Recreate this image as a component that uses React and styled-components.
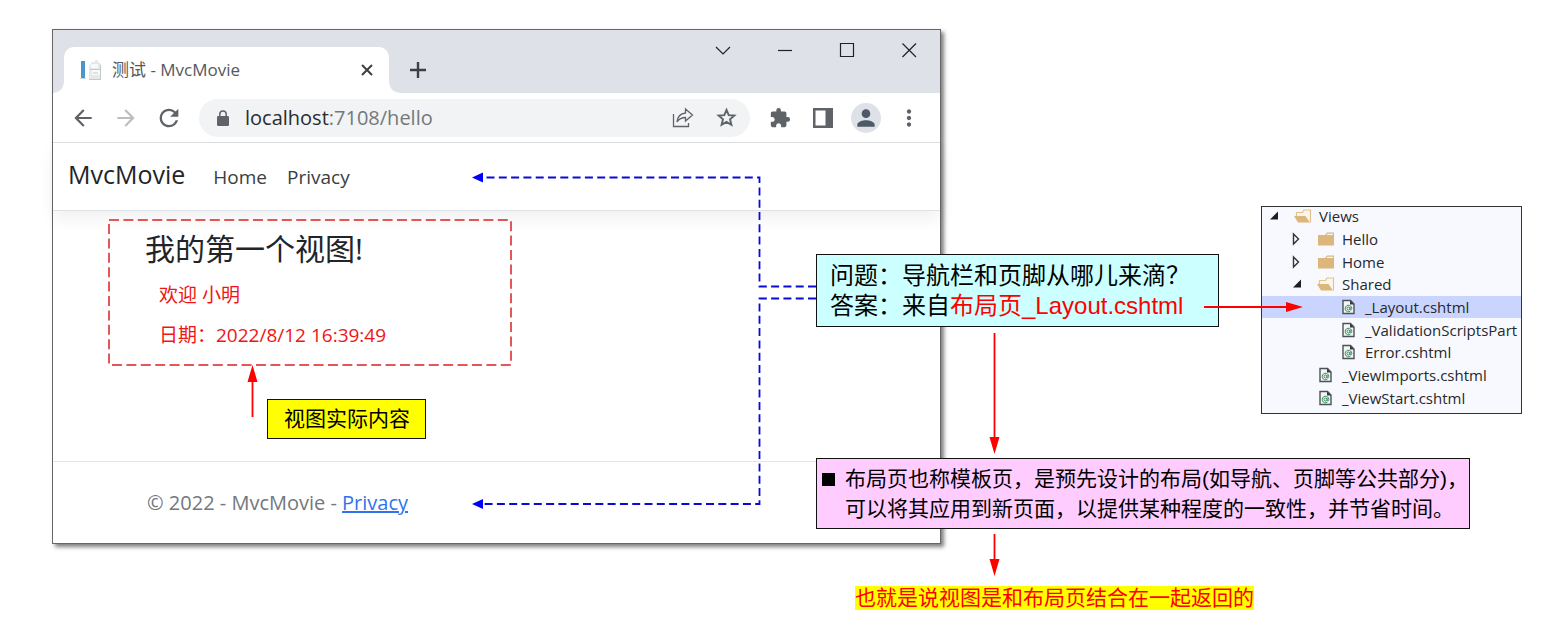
import React from "react";
import styled, { createGlobalStyle, css } from "styled-components";
import {
  MdArrowBack,
  MdArrowForward,
  MdRefresh,
  MdExtension,
  MdPerson,
  MdMoreVert,
} from "react-icons/md";

const uiFont = `"Open Sans", "Noto Sans CJK SC", sans-serif`;
const noteFont = `"Liberation Sans", "Noto Sans CJK SC", sans-serif`;

const GlobalStyle = createGlobalStyle`
  *, *::before, *::after { box-sizing: border-box; }
  body { margin: 0; background: #fff; }
  h1, p, ul { margin: 0; padding: 0; }
  ul { list-style: none; }
  svg { display: block; }
`;

/* The diagram canvas: windows and notes are placed freely on it. */
const Canvas = styled.main`
  position: relative;
  min-height: 632px;
  overflow: hidden;
  font-family: ${uiFont};
`;

const Node = styled.div`
  position: absolute;
  left: ${(p) => p.$x}px;
  top: ${(p) => p.$y}px;
`;

/* ---------- browser window ---------- */

const Browser = styled.section`
  display: flex;
  flex-direction: column;
  width: 889px;
  min-height: 515px;
  background: #fff;
  border: 1px solid #666;
  box-shadow: 3px 3px 4px rgba(0, 0, 0, 0.5);
`;

const TabStrip = styled.header`
  display: flex;
  align-items: flex-end;
  height: 63px;
  padding-left: 11px;
  background: #dee1e7;
`;

const Tab = styled.div`
  position: relative;
  display: flex;
  align-items: center;
  gap: 9px;
  width: 325px;
  height: 46px;
  padding: 0 12px 0 16px;
  background: #fff;
  border-radius: 10px 10px 0 0;
  color: #55585c;
  font-size: 17px;
  line-height: 24px;

  &::before,
  &::after {
    content: "";
    position: absolute;
    bottom: 0;
    width: 10px;
    height: 10px;
  }
  &::before {
    left: -10px;
    background: radial-gradient(circle at 0 0, #dee1e7 9px, #fff 10px);
  }
  &::after {
    right: -10px;
    background: radial-gradient(circle at 100% 0, #dee1e7 9px, #fff 10px);
  }
`;

const TabTitle = styled.span`
  flex: 1;
  white-space: nowrap;
`;

const IconButton = styled.button`
  display: flex;
  align-items: center;
  justify-content: center;
  flex: none;
  width: ${(p) => p.$w || 36}px;
  height: ${(p) => p.$h || 36}px;
  padding: 0;
  border: 0;
  background: none;
  color: ${(p) => p.$color || "#5f6368"};
`;

const WindowControls = styled.div`
  display: flex;
  align-self: flex-start;
  margin-left: auto;
`;

const Toolbar = styled.div`
  display: flex;
  align-items: center;
  height: 50px;
  padding: 0 13px 0 12px;
  border-bottom: 1px solid #dcdee0;
`;

const ButtonGroup = styled.div`
  display: flex;
  align-items: center;
  gap: 7px;
`;

const AddressBar = styled.div`
  display: flex;
  align-items: center;
  flex: 1;
  height: 38px;
  margin: 0 12px;
  padding: 0 6px 0 15px;
  border-radius: 19px;
  background: #f1f3f4;
  color: #5f6368;
`;

const Address = styled.div`
  flex: 1;
  margin-left: 13px;
  color: #74787c;
  font-size: 20px;
  line-height: 28px;
  outline: none;
`;

const Host = styled.span`
  color: #2a2c2f;
`;

const Avatar = styled.span`
  display: flex;
  align-items: center;
  justify-content: center;
  width: 30px;
  height: 30px;
  border-radius: 50%;
  background: #dee1e7;
  color: #4d5868;
`;

/* ---------- page inside the browser ---------- */

const NavBar = styled.nav`
  display: flex;
  align-items: baseline;
  height: 68px;
  padding: 14px 15px;
  border-bottom: 1px solid #dee2e6;
  box-shadow: 0 8px 16px rgba(0, 0, 0, 0.06);
`;

const NavLink = styled.a`
  margin-right: 20px;
  color: #3a3e42;
  font-size: 19px;
  line-height: 34px;
  text-decoration: none;

  ${(p) =>
    p.$brand &&
    css`
      margin-right: 28px;
      color: #212529;
      font-size: 25px;
    `}
`;

const PageBody = styled.div`
  flex: 1;
  padding: 9px 56px 0;
`;

const ViewArea = styled.div`
  position: relative;
  width: 402px;
  padding: 9px 36px 18px;
`;

const DashedFrame = styled.svg`
  position: absolute;
  inset: 0;
  width: 100%;
  height: 100%;
  overflow: visible;
`;

const ViewTitle = styled.h1`
  color: #212529;
  font-size: 30px;
  font-weight: 400;
  line-height: 40px;
`;

const ViewText = styled.p`
  margin: 14px 0 16px 14px;
  color: #f01414;
  font-size: 19px;
  line-height: 24px;

  & + & {
    margin: 0 0 0 14px;
  }
`;

const Footer = styled.footer`
  height: 82px;
  padding: 27px 94px;
  border-top: 1px solid #e3e5e8;
  color: #72787e;
  font-size: 20px;
  line-height: 28px;
`;

const FooterLink = styled.a`
  color: #2f74ee;
  text-decoration: underline;
`;

/* ---------- notes ---------- */

const Note = styled.div`
  border: 1px solid #111;
  background: ${(p) => p.$bg};
  padding: ${(p) => p.$pad};
  color: #000;
  font-family: ${noteFont};
  font-size: ${(p) => p.$size || 21}px;
  line-height: 30px;
  white-space: nowrap;
`;

const Red = styled.span`
  color: #f00;
`;

const BulletRow = styled.div`
  display: flex;
  gap: 10px;

  &::before {
    content: "";
    width: 13px;
    height: 13px;
    margin-top: 9px;
    background: #000;
  }
`;

const Conclusion = styled.mark`
  display: block;
  background: #ff0;
  color: #f00;
  font-family: ${noteFont};
  font-size: 21px;
  line-height: 24px;
  white-space: nowrap;
`;

/* ---------- solution explorer ---------- */

const Explorer = styled.div`
  width: 261px;
  height: 208px;
  overflow: hidden;
  border: 1px solid #333;
  background: #f7f9fe;
`;

const Tree = styled.ul`
  display: flex;
  flex-direction: column;
  height: 204px;
  margin-top: -2px;
`;

const TreeRow = styled.li`
  display: flex;
  align-items: center;
  flex: 1;
  min-height: 0;
  padding-left: ${(p) => 4 + p.$level * 23}px;
  background: ${(p) => (p.$selected ? "#c9d5ff" : "none")};
  color: #26282c;
  font-size: 15px;
  line-height: 22px;
  white-space: nowrap;
`;

const Twisty = styled.span`
  flex: none;
  width: 16px;
  margin-right: 12px;
`;

const TreeIcon = styled.span`
  flex: none;
  width: 18px;
  margin-right: 7px;
`;

const Overlay = styled.svg`
  position: absolute;
  left: 0;
  top: 0;
  pointer-events: none;
`;

const Favicon = () => (
  <svg width="23" height="22" viewBox="0 0 23 22" aria-hidden="true">
    <rect x="1" y="2" width="4" height="17" fill="#4a96cc" />
    <rect x="0" y="19" width="6" height="1" fill="#d5d9dc" />
    <path d="M9 7l3-4h3V1h3v2l3 2v16H9z" fill="#e6e8ea" />
    <path d="M11 5h7v4h-7zM12 11h8v5h-8z" fill="#f8f9f9" />
    <path d="M10 10.500h10M13 14h5M9 20.500h12M20.500 6v14" stroke="#c6c9cc" />
  </svg>
);

const LockIcon = () => (
  <svg width="18" height="18" viewBox="0 0 18 18" aria-hidden="true">
    <rect x="3" y="7" width="12" height="10" rx="1.200" fill="currentColor" />
    <path d="M5.800 8V5.200a3.200 3.200 0 0 1 6.400 0V8" fill="none" stroke="currentColor" strokeWidth="1.500" />
  </svg>
);

const ShareIcon = () => (
  <svg width="22" height="22" viewBox="0 0 22 22" fill="none" stroke="currentColor" strokeWidth="1.3" aria-hidden="true">
    <path d="M1.500 7v12.500h15V16" />
    <path d="M13.500 2l7 6-7 6v-3.500c-4 0-6.500 1.500-8.500 4.500 .5-5 3.500-8.500 8.500-9z" />
  </svg>
);

const StarIcon = () => (
  <svg width="23" height="23" viewBox="0 0 24 24" fill="none" stroke="currentColor" strokeWidth="2" aria-hidden="true">
    <path d="M12 4.100l2.300 5.400 5.900.5-4.500 3.900 1.400 5.700-5.100-3-5.100 3 1.400-5.700-4.500-3.900 5.900-.5z" />
  </svg>
);

const SidePanelIcon = () => (
  <svg width="20" height="20" viewBox="0 0 20 20" aria-hidden="true">
    <path d="M0 0h20v20H0zM2.500 2.500v15h10v-15z" fill="currentColor" fillRule="evenodd" />
  </svg>
);

const FolderIcon = ({ open }) => (
  <svg width="18" height="16" viewBox="0 0 18 16" aria-hidden="true">
    {open ? (
      <>
        <path d="M2.500 8V4.500h6l1.500-2.500h6.500v12.500" fill="#fbf6ec" stroke="#e3c48f" strokeWidth="1.200" />
        <path d="M0 8h11.500l4.500 6.500H4z" fill="#dcb67a" />
      </>
    ) : (
      <path d="M1 4h7l2-2.500h7V14.500H1zM10.500 2.800l-1 1.200h6.500V2.800z" fill="#dcb67a" fillRule="evenodd" />
    )}
  </svg>
);

const RazorFileIcon = () => (
  <svg width="16" height="16" viewBox="-1 0 16 16" fill="none" aria-hidden="true">
    <path d="M2 1.500h7.500l3.500 3.500v9.500H2z" fill="#f4f6f6" stroke="#4c5256" strokeWidth="1.400" />
    <path d="M9 1.500v4h4z" fill="#33383c" />
    <circle cx="7.500" cy="9.500" r="1.500" stroke="#388a5a" strokeWidth="1" />
    <path d="M9 8v2.300c0 1.200 1.800 1 1.800-.8a3.300 3.300 0 1 0-1.500 2.800" stroke="#388a5a" strokeWidth="1" />
  </svg>
);

const TwistyIcon = ({ open }) => (
  <svg width="16" height="16" viewBox="0 0 16 16" aria-hidden="true">
    {open ? (
      <path d="M12 3.500v8H4z" fill="#1e1e1e" />
    ) : (
      <path d="M4.500 3l5 5-5 5z" fill="none" stroke="#333" strokeWidth="1.400" />
    )}
  </svg>
);

const controls = [
  ["搜索标签页", "M3 7l7 7 7-7"],
  ["最小化", "M3 10.500h14"],
  ["最大化", "M3.500 3.500h13v13h-13z"],
  ["关闭", "M3.500 3.500l13.500 13.500M17 3.500L3.500 17"],
];

const tree = [
  { name: "Views", level: 0, kind: "folder", open: true },
  { name: "Hello", level: 1, kind: "folder" },
  { name: "Home", level: 1, kind: "folder" },
  { name: "Shared", level: 1, kind: "folder", open: true },
  { name: "_Layout.cshtml", level: 2, kind: "file", selected: true },
  { name: "_ValidationScriptsPart", level: 2, kind: "file" },
  { name: "Error.cshtml", level: 2, kind: "file" },
  { name: "_ViewImports.cshtml", level: 1, kind: "file" },
  { name: "_ViewStart.cshtml", level: 1, kind: "file" },
];

function BrowserWindow() {
  return (
    <Browser>
      <TabStrip>
        <Tab>
          <Favicon />
          <TabTitle>测试 - MvcMovie</TabTitle>
          <IconButton $w={20} $h={20} $color="#3c4043" aria-label="关闭标签页">
            <svg width="20" height="20" viewBox="0 0 20 20" stroke="currentColor" strokeWidth="2">
              <path d="M5 5l10 10M15 5L5 15" />
            </svg>
          </IconButton>
        </Tab>
        <IconButton $w={58} $h={46} $color="#3c4043" aria-label="新标签页">
          <svg width="18" height="18" viewBox="0 0 18 18" stroke="currentColor" strokeWidth="2.400">
            <path d="M9 1v16M1 9h16" />
          </svg>
        </IconButton>
        <WindowControls>
          {controls.map(([label, d]) => (
            <IconButton key={label} $w={62} $h={40} $color="#222" aria-label={label}>
              <svg width="20" height="20" viewBox="0 0 20 20" fill="none" stroke="currentColor" strokeWidth="1.200">
                <path d={d} />
              </svg>
            </IconButton>
          ))}
        </WindowControls>
      </TabStrip>
      <Toolbar>
        <ButtonGroup>
          <IconButton aria-label="后退"><MdArrowBack size={26} /></IconButton>
          <IconButton $color="#bcbec1" aria-label="前进"><MdArrowForward size={26} /></IconButton>
          <IconButton aria-label="重新加载"><MdRefresh size={28} /></IconButton>
        </ButtonGroup>
        <AddressBar>
          <LockIcon />
          <Address role="textbox" tabIndex={0} aria-label="地址">
            <Host>localhost</Host>:7108/hello
          </Address>
          <ButtonGroup>
            <IconButton aria-label="分享"><ShareIcon /></IconButton>
            <IconButton aria-label="收藏"><StarIcon /></IconButton>
          </ButtonGroup>
        </AddressBar>
        <ButtonGroup>
          <IconButton aria-label="扩展程序"><MdExtension size={22} /></IconButton>
          <IconButton aria-label="侧边栏"><SidePanelIcon /></IconButton>
          <IconButton aria-label="用户"><Avatar><MdPerson size={26} /></Avatar></IconButton>
          <IconButton aria-label="菜单"><MdMoreVert size={26} /></IconButton>
        </ButtonGroup>
      </Toolbar>
      <NavBar>
        <NavLink $brand href="#">MvcMovie</NavLink>
        <NavLink href="#home">Home</NavLink>
        <NavLink href="#privacy">Privacy</NavLink>
      </NavBar>
      <PageBody>
        <ViewArea>
          <DashedFrame aria-hidden="true">
            <rect width="100%" height="100%" fill="none" stroke="#d92020" strokeWidth="1.500" strokeDasharray="10 4.400" />
          </DashedFrame>
          <ViewTitle>我的第一个视图!</ViewTitle>
          <ViewText>欢迎 小明</ViewText>
          <ViewText>日期：2022/8/12 16:39:49</ViewText>
        </ViewArea>
      </PageBody>
      <Footer>
        © 2022 - MvcMovie - <FooterLink href="#privacy">Privacy</FooterLink>
      </Footer>
    </Browser>
  );
}

function SolutionExplorer() {
  return (
    <Explorer>
      <Tree>
        {tree.map((n) => (
          <TreeRow key={n.name} $level={n.level} $selected={n.selected}>
            <Twisty>{n.kind === "folder" && <TwistyIcon open={n.open} />}</Twisty>
            <TreeIcon>{n.kind === "folder" ? <FolderIcon open={n.open} /> : <RazorFileIcon />}</TreeIcon>
            {n.name}
          </TreeRow>
        ))}
      </Tree>
    </Explorer>
  );
}

function Connectors() {
  return (
    <Overlay width="1541" height="632" fill="none" aria-hidden="true">
      <g stroke="#0a0ad8" strokeWidth="1.800" strokeDasharray="8 4.300">
        <path d="M816 286.500H759.500V177.500H483" />
        <path d="M816 298.500H759.500V504H483" />
      </g>
      <g fill="#00f">
        <path d="M472 177.500l11-5v10z" />
        <path d="M472 504l11-5v10z" />
      </g>
      <g stroke="#f00" strokeWidth="1.800">
        <path d="M252.500 417V380" />
        <path d="M1204 307H1288" />
        <path d="M994.500 333V440" />
        <path d="M994.500 534V562" />
      </g>
      <g fill="#f00">
        <path d="M252.500 365l5 17h-10z" />
        <path d="M1303 307l-17-5v10z" />
        <path d="M994.500 454l-5-17h10z" />
        <path d="M994.500 576l-5-17h10z" />
      </g>
    </Overlay>
  );
}

export default function App() {
  return (
    <>
      <GlobalStyle />
      <Canvas>
        <Node $x={52} $y={29}>
          <BrowserWindow />
        </Node>
        <Node $x={267} $y={399}>
          <Note $bg="#ff0" $pad="4px 15px 4px 16px">视图实际内容</Note>
        </Node>
        <Node $x={816} $y={254}>
          <Note $bg="#cff" $pad="6px 28px 5px 13px" $size={24}>
            <div>问题：导航栏和页脚从哪儿来滴？</div>
            <div>答案：来自<Red>布局页_Layout.cshtml</Red></div>
          </Note>
        </Node>
        <Node $x={1261} $y={206}>
          <SolutionExplorer />
        </Node>
        <Node $x={816} $y={458}>
          <Note $bg="#fcf" $pad="5px 1px 4px 5px">
            <BulletRow>
              <p>
                布局页也称模板页，是预先设计的布局(如导航、页脚等公共部分)，
                <br />
                可以将其应用到新页面，以提供某种程度的一致性，并节省时间。
              </p>
            </BulletRow>
          </Note>
        </Node>
        <Node $x={855} $y={586}>
          <Conclusion>也就是说视图是和布局页结合在一起返回的</Conclusion>
        </Node>
        <Connectors />
      </Canvas>
    </>
  );
}
